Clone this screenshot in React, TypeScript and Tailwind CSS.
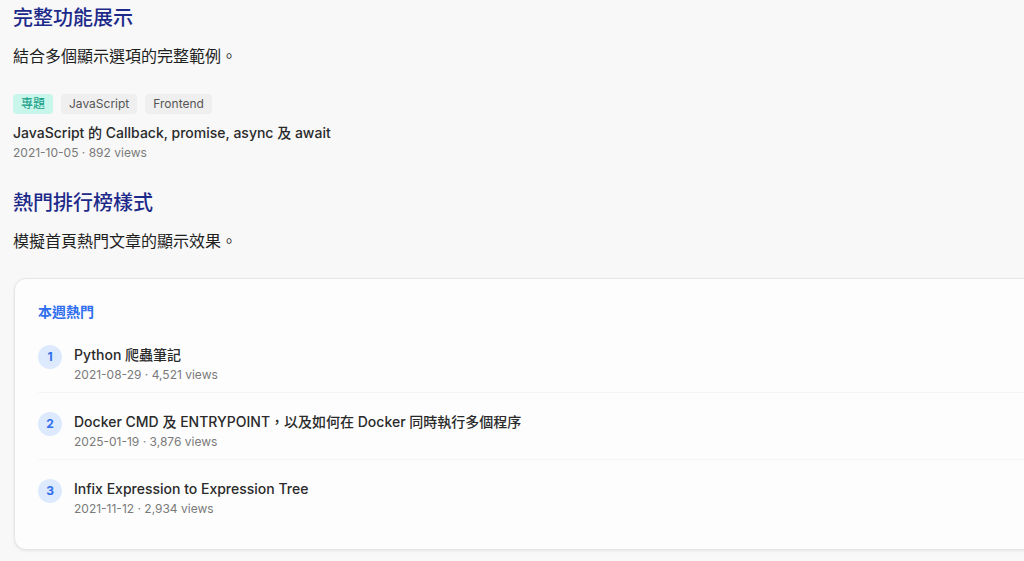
import * as React from "react";

type Post = { title: string; date: string; views: string };

const hot: Post[] = [
  { title: "Python 爬蟲筆記", date: "2021-08-29", views: "4,521" },
  { title: "Docker CMD 及 ENTRYPOINT，以及如何在 Docker 同時執行多個程序", date: "2025-01-19", views: "3,876" },
  { title: "Infix Expression to Expression Tree", date: "2021-11-12", views: "2,934" },
];

function Meta({ date, views }: { date: string; views: string }) {
  return (
    <div className="text-[12px] leading-4 text-[#7a7a7a]">
      {date} · {views} views
    </div>
  );
}

export default function App() {
  return (
    <div
      className="min-h-[561px] w-full overflow-hidden bg-[#f8f8f8] pl-[13px] pt-[4px] text-[#222]"
      style={{ fontFamily: 'Inter, "Noto Sans CJK TC", sans-serif' }}
    >
      <h2 className="text-[20px] leading-7 font-medium text-[#1d2a8a]">完整功能展示</h2>
      <p className="mt-3 text-[16px] leading-6 text-[#1f1f1f]">結合多個顯示選項的完整範例。</p>

      <div className="mt-[26px] flex gap-[8px]">
        <span className="rounded-[4px] bg-[#c9f6ea] px-[8px] text-[12px] leading-[20px] text-[#0d9a83]">專題</span>
        <span className="rounded-[4px] bg-[#efefef] px-[8px] text-[12px] leading-[20px] text-[#555]">JavaScript</span>
        <span className="rounded-[4px] bg-[#efefef] px-[8px] text-[12px] leading-[20px] text-[#555]">Frontend</span>
      </div>
      <div className="mt-[9px] text-[14px] leading-5 font-medium text-[#2a2a2a]">
        JavaScript 的 Callback, promise, async 及 await
      </div>
      <div className="mt-[2px]">
        <Meta date="2021-10-05" views="892" />
      </div>

      <h2 className="mt-[28px] text-[20px] leading-7 font-medium text-[#1d2a8a]">熱門排行榜樣式</h2>
      <p className="mt-3 text-[16px] leading-6 text-[#1f1f1f]">模擬首頁熱門文章的顯示效果。</p>

      <div className="ml-px mt-[25px] w-[1040px] rounded-[12px] border border-[#e6e6e6] bg-[#fdfdfd] px-[23px] pb-[23px] pt-[23px] shadow-[0_1px_3px_rgba(0,0,0,0.08)]">
        <div className="text-[14px] leading-5 font-semibold text-[#2f6fed]">本週熱門</div>
        <div className="mt-[23px] flex flex-col">
          {hot.map((p, i) => (
            <div
              key={p.title}
              className={
                i < hot.length - 1
                  ? "flex items-start gap-3 border-b border-[#f5f5f5] pb-[9px] mb-[19px]"
                  : "flex items-start gap-3 pb-[9px]"
              }
            >
              <div className="flex h-6 w-6 shrink-0 items-center justify-center rounded-full bg-[#dde9fd] text-[12px] font-bold text-[#2f6fed]">
                {i + 1}
              </div>
              <div className="flex flex-col gap-[2px]">
                <div className="text-[14px] leading-5 font-medium text-[#2a2a2a]">{p.title}</div>
                <Meta date={p.date} views={p.views} />
              </div>
            </div>
          ))}
        </div>
      </div>
    </div>
  );
}
